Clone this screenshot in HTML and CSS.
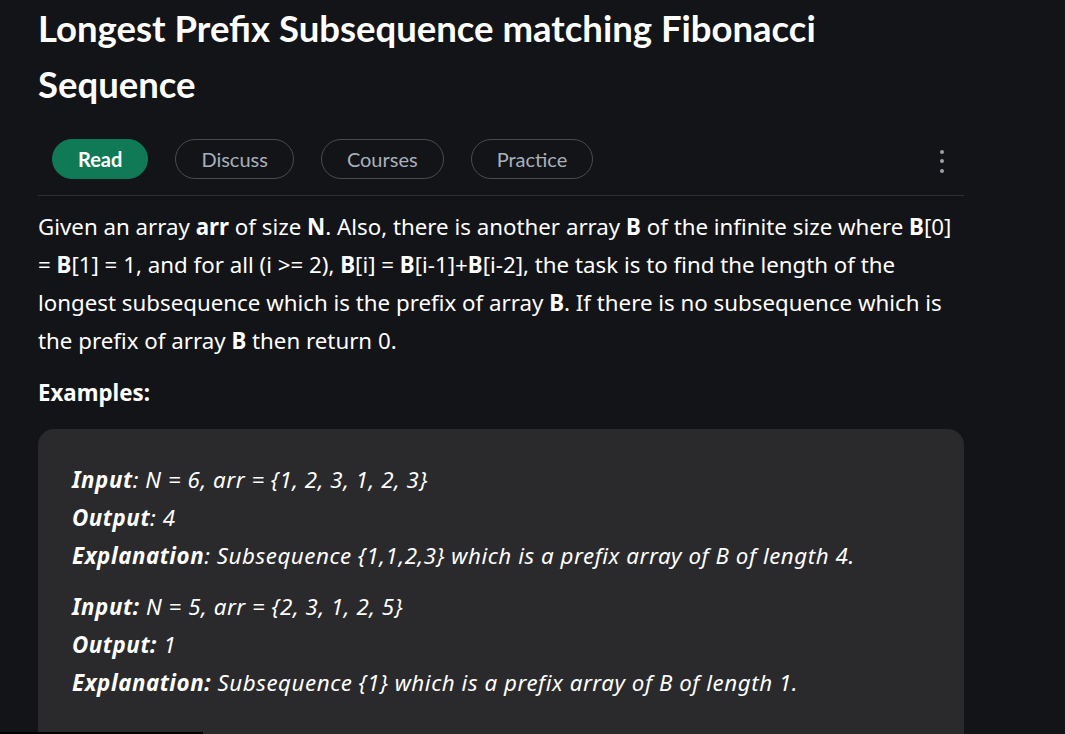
FILE: index.html
```html
<!DOCTYPE html>
<html lang="en">
<head>
<meta charset="utf-8">
<title>Longest Prefix Subsequence matching Fibonacci Sequence</title>
<link rel="stylesheet" href="styles.css">
</head>
<body>
<main class="article">
  <h1 class="title">Longest Prefix Subsequence matching Fibonacci Sequence</h1>
  <div class="tabs">
    <div class="tab-list">
      <span class="tab tab-active">Read</span>
      <span class="tab">Discuss</span>
      <span class="tab">Courses</span>
      <span class="tab">Practice</span>
    </div>
    <span class="kebab" aria-label="more"><i></i><i></i><i></i></span>
  </div>
  <p class="text">Given an array <b>arr</b> of size <b>N</b>. Also, there is another array <b>B</b> of the infinite size where <b>B</b>[0] = <b>B</b>[1] = 1, and for all (i &gt;= 2), <b>B</b>[i] = <b>B</b>[i-1]+<b>B</b>[i-2], the task is to find the length of the longest subsequence which is the prefix of array <b>B</b>. If there is no subsequence which is the prefix of array <b>B</b> then return 0.</p>
  <p class="text text-head"><b>Examples:</b></p>
  <div class="example">
    <p class="ex-group"><b>Input</b>: N = 6, arr = {1, 2, 3, 1, 2, 3}<br><b>Output</b>: 4<br><b>Explanation</b>: Subsequence {1,1,2,3} which is a prefix array of B of length 4.</p>
    <p class="ex-group"><b>Input:</b> N = 5, arr = {2, 3, 1, 2, 5}<br><b>Output:</b> 1<br><b>Explanation:</b> Subsequence {1} which is a prefix array of B of length 1.</p>
  </div>
</main>
<div class="scroll-thumb"></div>
</body>
</html>
```
FILE: styles.css
```css
html, body {
  margin: 0;
  padding: 0;
  background: #131417;
  height: 100%;
  overflow: hidden;
}
.article {
  width: 926px;
  padding-left: 38px;
  color: #ffffff;
  font-family: "Noto Sans", "Open Sans", sans-serif;
}
.title {
  margin: 0;
  font-family: "Lato", "Liberation Sans", sans-serif;
  font-size: 36.5px;
  font-weight: 700;
  line-height: 56px;
  color: #ffffff;
  padding-right: 100px;
}
.tabs {
  margin-top: 27px;
  padding: 0 0 16px 14px;
  border-bottom: 1px solid #2e2f33;
  display: flex;
  align-items: center;
  justify-content: space-between;
}
.tab-list {
  display: flex;
  gap: 27px;
}
.tab {
  height: 40px;
  box-sizing: border-box;
  border: 1px solid #4a4b4f;
  border-radius: 20px;
  padding: 0 25px;
  display: flex;
  align-items: center;
  font-family: "Lato", "Liberation Sans", sans-serif;
  font-size: 20px;
  color: #a9b0bc;
}
.tab-active {
  background: #0f7a55;
  border-color: #0f7a55;
  color: #ffffff;
  font-weight: 700;
}
.kebab {
  display: flex;
  flex-direction: column;
  gap: 5.5px;
  margin-right: 20px;
  margin-top: 4px;
}
.kebab i {
  width: 4px;
  height: 4px;
  border-radius: 50%;
  background: #9a9ea6;
}
.text {
  margin: 12px 0 0;
  font-size: 22.3px;
  line-height: 38px;
}
.text-head {
  margin-top: 14px;
}
.text b { font-weight: 700; }
.example {
  margin-top: 17px;
  background: #2a2a2c;
  border-radius: 16px;
  padding: 32px 34px 40px;
}
.ex-group {
  margin: 0 0 13px;
  font-size: 22.3px;
  line-height: 38px;
  font-style: italic;
  letter-spacing: 0.55px;
}
.scroll-thumb {
  position: fixed;
  left: 0;
  bottom: 0;
  width: 203px;
  height: 2px;
  background: #000000;
}
```
